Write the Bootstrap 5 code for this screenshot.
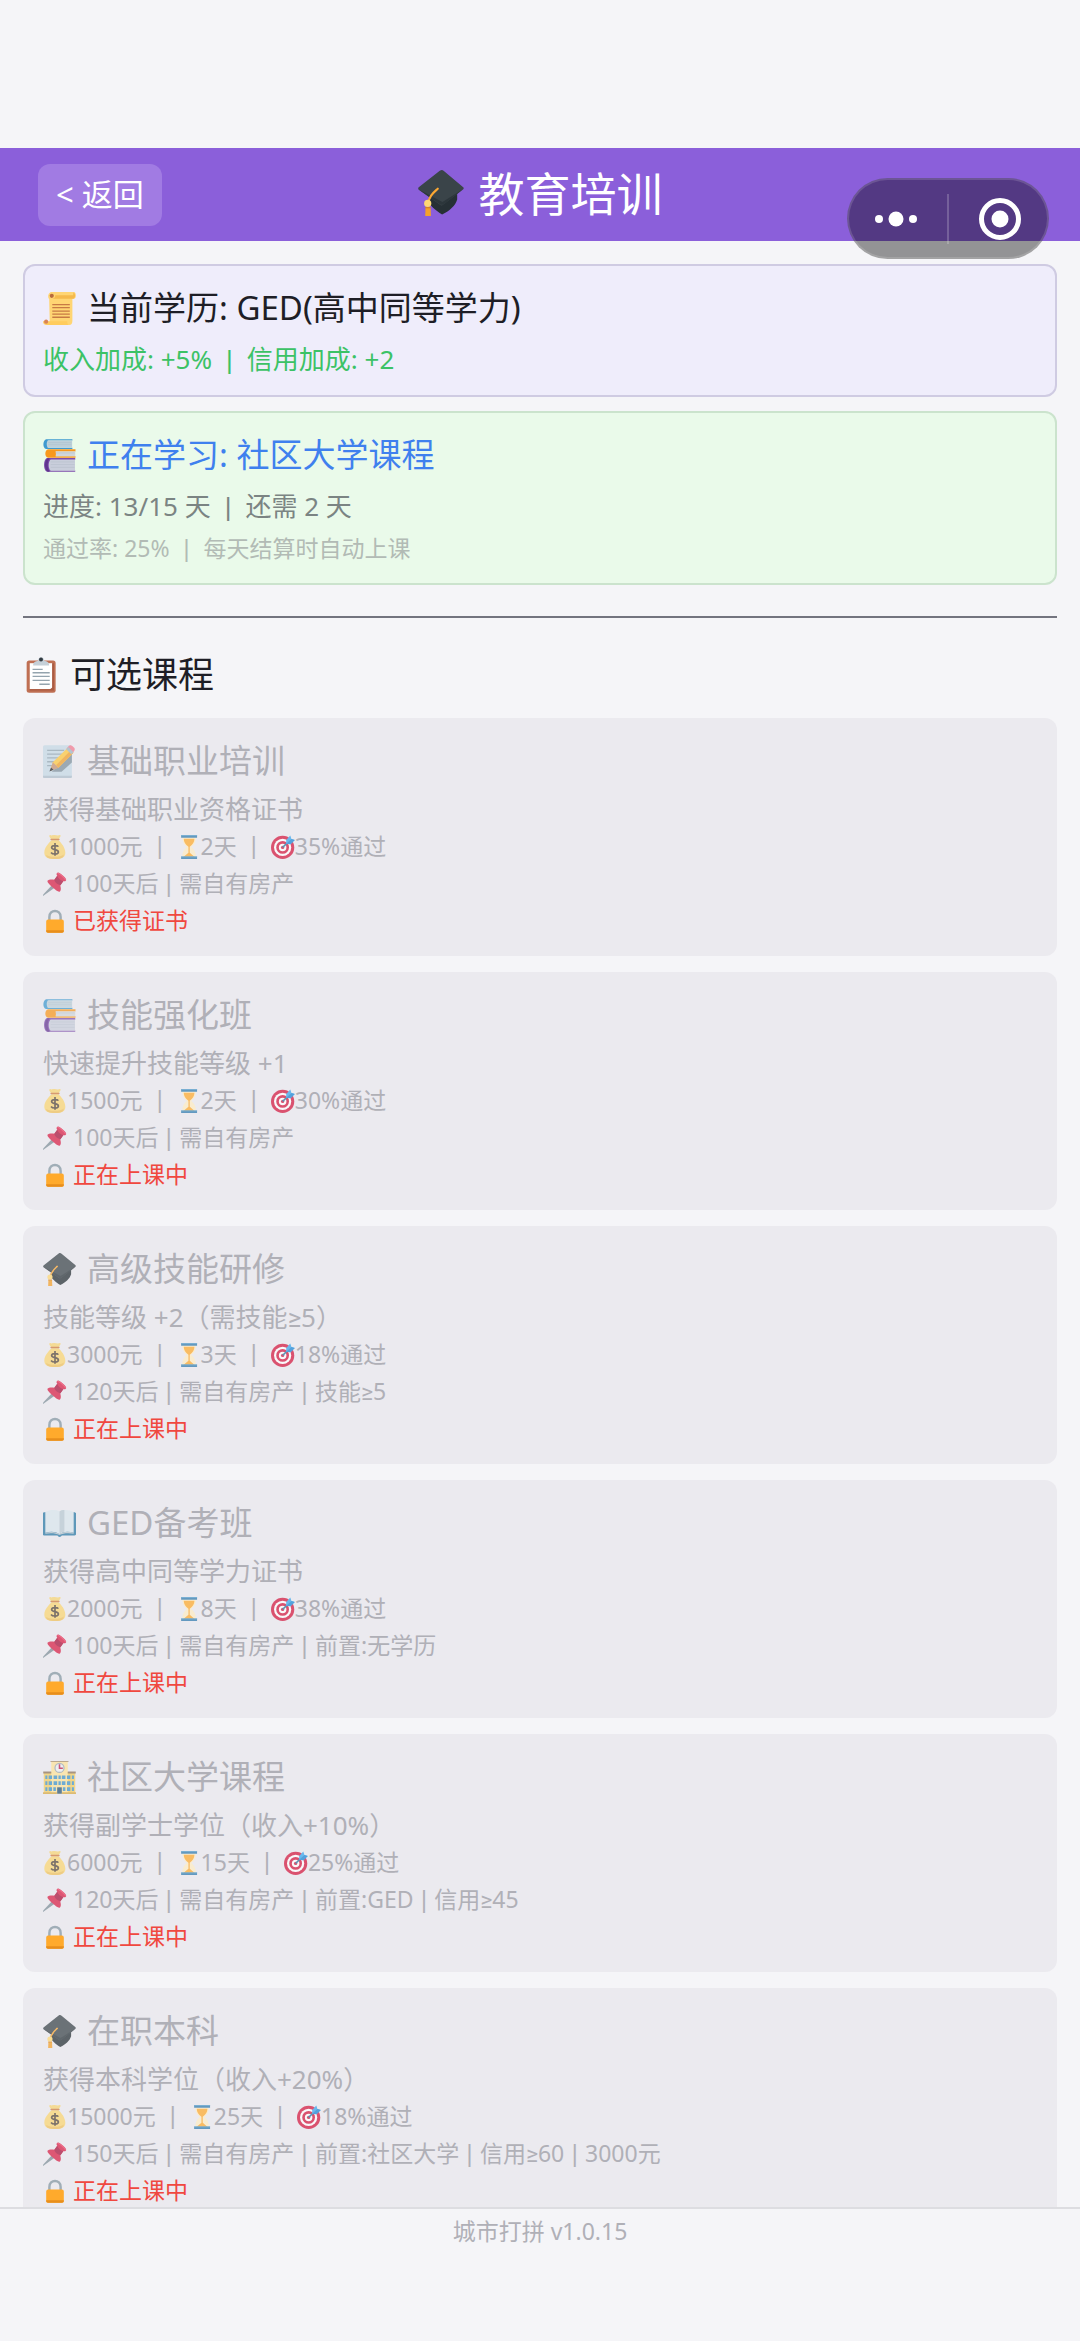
<!DOCTYPE html>
<html lang="zh-CN">
<head>
<meta charset="utf-8">
<meta name="viewport" content="width=device-width, initial-scale=1">
<title>教育培训</title>
<link href="https://cdn.jsdelivr.net/npm/bootstrap@5.3.0/dist/css/bootstrap.min.css" rel="stylesheet">
<style>
  body { background: #f5f5f8; color: #1e1e26; font-family: "Noto Sans", Roboto, "Noto Sans CJK SC", sans-serif; }
  .status-space { height: 148px; }
  .top-bar { height: 93px; background: #8b5fda; z-index: 2; }
  .top-bar h1 { font-size: 46px; line-height: 60px; font-weight: 400; gap: 15px; }
  .back-btn { left: 38px; font-size: 31px; line-height: 40px; padding: 10px 18px 12px; border: 0; border-radius: 12px; background: #a17be3; color: #fff; }
  .back-btn:hover { background: #ad8ae8; color: #fff; }
  .capsule { top: 30px; right: 31px; width: 202px; height: 81px; border-radius: 41px; background: rgba(0,0,0,.4); border: 2px solid rgba(255,255,255,.14); }
  .capsule button { background: none; border: 0; color: #fff; }
  .capsule-rule { width: 2px; height: 50px; background: rgba(255,255,255,.2); }
  main { padding: 23px 23px 0; scrollbar-width: none; }
  main::-webkit-scrollbar { display: none; }
  .ico { width: 1em; height: 1em; flex: none; overflow: visible; }
  .panel { border-radius: 12px; border-width: 2px; padding: 19px 18px 17px; margin-bottom: 14px; color: #1e1e26; }
  .panel-degree { background: #efedfb; border-color: #cfcbe2; }
  .panel-study { background: #eafaea; border-color: #cbe3cd; padding-bottom: 16px; margin-bottom: 31px; }
  .line-title { font-size: 33px; line-height: 46px; font-weight: 400; gap: 11px; }
  .line-text { font-size: 26px; line-height: 38px; }
  .line-note { font-size: 23px; line-height: 37px; }
  .panel .line-title { margin-bottom: 9px; }
  .t-green { color: #3cc266; }
  .t-blue { color: #3f80ee; }
  .t-grey { color: #7b8483; }
  .t-faint { color: #b2bbb5; margin-top: 5px; }
  .bar, .sep { font-family: "Liberation Sans", sans-serif; line-height: 1; }
  .bar { margin: 0 14px; }
  .sep { margin: 0 1px; }
  .divider { height: 2px; background: #73747f; opacity: 1; border: 0; margin: 0 0 32px; }
  .section-title { font-size: 36px; line-height: 50px; font-weight: 400; gap: 11px; margin-bottom: 18px; }
  .course { background: #ebeaef; border: 0; border-radius: 12px; padding: 20px 20px 17px; margin-bottom: 16px; color: #b0b0b7; }
  .course .line-title { margin-bottom: 6px; }
  .faded { opacity: .72; }
  .course .line-note { display: flex; align-items: center; gap: 6px; }
  .course .line-note.facts { gap: 0; }
  .course .line-note .ico { width: 24px; height: 24px; }
  .course .line-note .fact { display: inline-flex; align-items: center; }
  .course .locked { color: #f0483f; }
  .foot { height: 134px; border-top: 2px solid #dddde1; color: #b0b0b7; padding-top: 4px; }
</style>
</head>
<body>
<svg class="d-none" xmlns="http://www.w3.org/2000/svg">
  <symbol id="i-cap" viewBox="0 0 128 128">
    <path d="M40 62 28 84c2 14 22 28 39 40 22-11 37-25 42-42V52z" fill="#263035"/>
    <path d="M66 0c-3 0-5 2-9 5L2 48c-2 2-2 5 0 7l59 42c3 2 6 2 9 0l55-43c3-2 3-5 0-7L72 3c-2-2-4-3-6-3z" fill="#3a4449"/>
    <path d="M2 54l61 43 7 0 56-44-58 36z" fill="#2c363b"/>
    <path d="M55 52C42 64 31 72 28 94" fill="none" stroke="#fca833" stroke-width="6" stroke-linecap="round"/>
    <path d="M21 104h14l1 24c-5 3-12 3-16 0z" fill="#f5a12a"/><circle cx="27" cy="93" r="10" fill="#ffd873"/><path d="M20 105h15" stroke="#d98215" stroke-width="3"/>
  </symbol>
  <symbol id="i-scroll" viewBox="0 0 128 128">
    <path d="M34 0h86c9 0 11 24 0 26h-6v86c0 9-4 16-12 16H14c10-1 12-8 12-17l-2-84c-7-3-5-27 10-27z" fill="#ffd573"/>
    <path d="M36 26h82c8-3 9-20 0-24l-1 11H47c2 6-3 12-11 13z" fill="#f5b94c"/>
    <path d="M0 113h94c0 8 2 14 6 15H14C6 128-1 121 0 113z" fill="#ffcc5e"/>
    <circle cx="34" cy="15" r="8" fill="#b96b3c"/><circle cx="12" cy="115" r="8" fill="#d98356"/>
    <path d="M36 49h68M36 61h68M36 74h68M36 86h68M36 98h68" stroke="#c77a45" stroke-width="5"/>
  </symbol>
  <symbol id="i-books" viewBox="0 0 128 128">
    <path d="M12 1h102v5H20v28h94v5H12C-3 34-1 6 12 1z" fill="#3f9ad0"/><path d="M18 6h95v28H18c-5-7-5-21 0-28z" fill="#bdd0da"/><path d="M20 14h90M20 22h90" stroke="#a9bfcb" stroke-width="2"/>
    <path d="M20 40h106v8H50v19h76v6H20C5 69 6 44 20 40z" fill="#f8981d"/><path d="M48 48h77v19H48c4-6 4-13 0-19z" fill="#d0d6db"/><path d="M50 54h72" stroke="#b5bec4" stroke-width="2"/>
    <path d="M15 74h110v6H30v42h95v5H15C0 121 1 80 15 74z" fill="#7c4bab"/><path d="M28 80h96v42H28c-8-11-8-31 0-42z" fill="#c9cedb"/><path d="M18 75c-14 10-13 42 0 52h8c-10-14-10-38 0-52z" fill="#61358e"/><path d="M30 89h92M30 99h92M30 110h92" stroke="#b4bac9" stroke-width="2"/>
  </symbol>
  <symbol id="i-clipboard" viewBox="0 0 128 128">
    <rect x="13" y="12" width="103" height="115" rx="9" fill="#bf6f53"/><path d="M24 22h80v92H24z" fill="#fff"/><path d="M104 22v86l-8 7H24v4h86V22z" fill="#a95b42"/>
    <path d="M36 30c0-12 10-16 17-16 1-18 22-18 23 0 8 0 17 4 17 16z" fill="#c5d0d8"/><circle cx="64" cy="9" r="7" fill="#333b42"/>
    <path d="M34 44h36M34 56h61M34 69h61M34 83h61M58 97h37" stroke="#94a4ae" stroke-width="5"/>
  </symbol>
  <symbol id="i-memo" viewBox="0 0 128 128">
    <rect x="0" y="1" width="112" height="127" rx="6" fill="#c6dae6"/><path d="M0 119h112v4c0 3-2 5-5 5H5c-3 0-5-2-5-5z" fill="#aebfcc"/>
    <path d="M16 21h66M16 35h58M16 50h46M16 65h37M16 80h22" stroke="#91a5b2" stroke-width="5"/>
    <path d="M112 30v38L72 104H34z" fill="#7f919c"/>
    <path d="M29 96 38 67 97 10l21 20-58 58z" fill="#ffc83f"/><path d="m108 20 10 10-58 58-9-10z" fill="#f2a22a"/>
    <path d="M38 67 29 96l-3 6 34-14z" fill="#c69271"/><path d="m31 87-6 16 16-7z" fill="#24282b"/><path d="m91 15 8-10c6-7 11-4 17 1s10 10 5 17l-9 11z" fill="#f27c91"/><path d="m90 16 8-8 20 20-8 8z" fill="#9fb6c2"/>
  </symbol>
  <symbol id="i-bag" viewBox="0 0 128 128">
    <path d="M38 0c9 5 13 0 23 0s18 5 29 0c6 0 5 7 0 12l-8 16H47L36 12c-4-5-3-12 2-12z" fill="#f8d674"/>
    <path d="M46 28h37c14 15 35 36 36 65 1 25-18 35-55 35S7 119 7 94c1-30 24-51 39-66z" fill="#fbd672"/><path d="M17 105c10 14 82 16 92-3 5 15-8 26-45 26-30 0-49-7-47-23z" fill="#f0c15c"/>
    <path d="M43 24h42" stroke="#cf7b42" stroke-width="7" stroke-linecap="round"/>
    <path d="M82 62c-5-7-36-9-36 5 0 15 36 7 36 23 0 14-31 15-39 3M64 43v67" fill="none" stroke="#544639" stroke-width="9"/>
  </symbol>
  <symbol id="i-hour" viewBox="0 0 128 128">
    <path d="M28 9h73c0 25-8 41-25 54 17 15 25 32 25 56H28c0-24 8-41 25-56C36 50 28 34 28 9z" fill="#ffedc4"/>
    <path d="M36 20h57c-1 19-9 31-25 42v32l26 23H34l27-23V62C45 51 37 39 36 20z" fill="#ffab2e"/>
    <path d="M22 0h85v14H22zM22 114h85v14H22z" fill="#2f7bae"/><path d="M22 0h85v4H22zM22 114h85v4H22z" fill="#5ba4cf"/>
  </symbol>
  <symbol id="i-target" viewBox="0 0 128 128">
    <circle cx="62" cy="66" r="62" fill="#d4183f"/><circle cx="62" cy="66" r="46" fill="#fff"/><circle cx="62" cy="66" r="34" fill="#d4183f"/><circle cx="62" cy="66" r="20" fill="#fff"/><circle cx="62" cy="66" r="9" fill="#d4183f"/>
    <path d="m62 66 34-33" stroke="#24749e" stroke-width="8"/><path d="M81 47V26l22-23 6 18 18 6-23 22z" fill="#39a5ed"/><path d="m81 47 28-26 18 6-23 22z" fill="#1b86d6"/>
  </symbol>
  <symbol id="i-pin" viewBox="0 0 128 128">
    <path d="m46 72 14 13-60 43-3-4z" fill="#7f9099"/>
    <path d="M73 8c6-11 15-4 29 8s26 22 20 30c-5 6-11 3-14 3L92 72c4 12 5 26-2 32-7 5-22-7-38-21S21 55 24 47c6-9 25-8 36-6l16-21c-3-4-5-8-3-12z" fill="#d81f45"/>
    <path d="M76 20c4 13 15 24 32 29L93 71C79 68 65 58 60 43z" fill="#a9133c"/><path d="M75 8c10 3 40 24 44 39 11-7-9-21-17-31C90 6 78-1 75 8z" fill="#ee4163"/>
  </symbol>
  <symbol id="i-lock" viewBox="0 0 128 128">
    <path d="M34 64V42c0-42 60-42 60 0v22" fill="none" stroke="#a0aeb7" stroke-width="13"/>
    <rect x="17" y="56" width="94" height="70" rx="10" fill="#ffaa2c"/><path d="M17 113h94v4c0 6-4 9-9 9H26c-5 0-9-3-9-9z" fill="#e78e1c"/>
  </symbol>
  <symbol id="i-open" viewBox="0 0 128 128">
    <path d="M4 20c-6 2-5 8-5 12v70c0 8 4 9 10 9h47c3 7 14 7 17 0h46c8 0 10-3 10-10V32c0-5 0-10-6-12z" fill="#2979a5"/>
    <path d="M9 20c16-11 42-10 55-3 12-8 40-7 55 3v80c-19-6-42-6-55 6-14-12-36-12-55-6z" fill="#dae7ed"/>
    <path d="M64 17v89c-12-9-31-12-55-6v4c23-4 40-2 55 5 14-7 33-9 55-5v-4c-18-6-42-5-55 6z" fill="#b5c4cc"/><path d="M64 17c5-3 12-5 19-5v84c-9 0-15 4-19 10z" fill="#b9c9d2"/>
  </symbol>
  <symbol id="i-school" viewBox="0 0 128 128">
    <path d="M3 43h122v85H3z" fill="#f5ce61"/><path d="M32 0h64v128H32z" fill="#ffe49a"/><path d="M29-3h70v6H29zM1 41h31v7H1zM96 41h31v7H96z" fill="#8d7458"/>
    <circle cx="64" cy="27" r="20" fill="#9da9b0"/><circle cx="64" cy="27" r="15" fill="#eef1f2"/><path d="M64 13v15h13" fill="none" stroke="#bf1e4b" stroke-width="6"/>
    <path d="M9 56h8v14H9zM22 56h13v14H22zM41 56h14v14H41zM73 56h14v14H73zM93 56h13v14H93zM112 56h8v14h-8zM9 79h8v14H9zM22 79h13v14H22zM41 79h14v14H41zM73 79h14v14H73zM93 79h13v14H93zM112 79h8v14h-8zM9 102h8v14H9zM22 102h13v14H22zM93 102h13v14H93zM112 102h8v14h-8zM60 56h9v14h-9zM60 79h9v14h-9zM40 102h10v14H40zM77 102h10v14H77z" fill="#3f94c9"/>
    <path d="M55 102h18v25H55z" fill="#2a5576"/><path d="M0 121h54v7H0zM74 121h54v7H74z" fill="#d7a944"/>
  </symbol>
</svg>

<div class="d-flex flex-column vh-100">
  <div class="status-space flex-shrink-0"></div>
  <header class="top-bar position-relative flex-shrink-0 d-flex align-items-center justify-content-center text-white">
    <button type="button" class="btn back-btn position-absolute">&lt; 返回</button>
    <h1 class="d-flex align-items-center mb-0 pb-1"><svg class="ico" aria-hidden="true"><use href="#i-cap"/></svg>教育培训</h1>
    <div class="capsule position-absolute d-flex align-items-center">
      <button type="button" class="flex-fill p-0 pe-1 d-flex justify-content-center" aria-label="更多"><svg width="44" height="44" viewBox="0 0 44 44" fill="#fff"><circle cx="5" cy="22" r="4"/><circle cx="22" cy="22" r="7.5"/><circle cx="39" cy="22" r="4"/></svg></button>
      <div class="capsule-rule"></div>
      <button type="button" class="flex-fill p-0 ps-1 d-flex justify-content-center" aria-label="关闭"><svg width="44" height="44" viewBox="0 0 44 44"><circle cx="22" cy="22" r="18.5" fill="none" stroke="#fff" stroke-width="5"/><circle cx="22" cy="22" r="8.5" fill="#fff"/></svg></button>
    </div>
  </header>

  <main class="flex-grow-1 overflow-auto">
    <section class="card panel panel-degree">
      <h2 class="line-title d-flex align-items-center"><svg class="ico" aria-hidden="true"><use href="#i-scroll"/></svg>当前学历: GED(高中同等学力)</h2>
      <div class="line-text t-green">收入加成: +5%<span class="bar">|</span>信用加成: +2</div>
    </section>
    <section class="card panel panel-study">
      <h2 class="line-title t-blue d-flex align-items-center"><svg class="ico" aria-hidden="true"><use href="#i-books"/></svg>正在学习: 社区大学课程</h2>
      <div class="line-text t-grey">进度: 13/15 天<span class="bar">|</span>还需 2 天</div>
      <div class="line-note t-faint">通过率: 25%<span class="bar">|</span>每天结算时自动上课</div>
    </section>

    <hr class="divider">
    <h2 class="section-title d-flex align-items-center"><svg class="ico" aria-hidden="true"><use href="#i-clipboard"/></svg>可选课程</h2>

    <article class="card course">
      <h3 class="line-title d-flex align-items-center"><svg class="ico faded" aria-hidden="true"><use href="#i-memo"/></svg>基础职业培训</h3>
      <div class="line-text">获得基础职业资格证书</div>
      <div class="line-note facts"><span class="fact"><svg class="ico faded" aria-hidden="true"><use href="#i-bag"/></svg>1000元</span><span class="bar">|</span><span class="fact"><svg class="ico faded" aria-hidden="true"><use href="#i-hour"/></svg>2天</span><span class="bar">|</span><span class="fact"><svg class="ico faded" aria-hidden="true"><use href="#i-target"/></svg>35%通过</span></div>
      <div class="line-note"><svg class="ico faded" aria-hidden="true"><use href="#i-pin"/></svg><span>100天后<span class="sep"> | </span>需自有房产</span></div>
      <div class="line-note locked"><svg class="ico" aria-hidden="true"><use href="#i-lock"/></svg>已获得证书</div>
    </article>

    <article class="card course">
      <h3 class="line-title d-flex align-items-center"><svg class="ico faded" aria-hidden="true"><use href="#i-books"/></svg>技能强化班</h3>
      <div class="line-text">快速提升技能等级 +1</div>
      <div class="line-note facts"><span class="fact"><svg class="ico faded" aria-hidden="true"><use href="#i-bag"/></svg>1500元</span><span class="bar">|</span><span class="fact"><svg class="ico faded" aria-hidden="true"><use href="#i-hour"/></svg>2天</span><span class="bar">|</span><span class="fact"><svg class="ico faded" aria-hidden="true"><use href="#i-target"/></svg>30%通过</span></div>
      <div class="line-note"><svg class="ico faded" aria-hidden="true"><use href="#i-pin"/></svg><span>100天后<span class="sep"> | </span>需自有房产</span></div>
      <div class="line-note locked"><svg class="ico" aria-hidden="true"><use href="#i-lock"/></svg>正在上课中</div>
    </article>

    <article class="card course">
      <h3 class="line-title d-flex align-items-center"><svg class="ico faded" aria-hidden="true"><use href="#i-cap"/></svg>高级技能研修</h3>
      <div class="line-text">技能等级 +2（需技能≥5）</div>
      <div class="line-note facts"><span class="fact"><svg class="ico faded" aria-hidden="true"><use href="#i-bag"/></svg>3000元</span><span class="bar">|</span><span class="fact"><svg class="ico faded" aria-hidden="true"><use href="#i-hour"/></svg>3天</span><span class="bar">|</span><span class="fact"><svg class="ico faded" aria-hidden="true"><use href="#i-target"/></svg>18%通过</span></div>
      <div class="line-note"><svg class="ico faded" aria-hidden="true"><use href="#i-pin"/></svg><span>120天后<span class="sep"> | </span>需自有房产<span class="sep"> | </span>技能≥5</span></div>
      <div class="line-note locked"><svg class="ico" aria-hidden="true"><use href="#i-lock"/></svg>正在上课中</div>
    </article>

    <article class="card course">
      <h3 class="line-title d-flex align-items-center"><svg class="ico faded" aria-hidden="true"><use href="#i-open"/></svg>GED备考班</h3>
      <div class="line-text">获得高中同等学力证书</div>
      <div class="line-note facts"><span class="fact"><svg class="ico faded" aria-hidden="true"><use href="#i-bag"/></svg>2000元</span><span class="bar">|</span><span class="fact"><svg class="ico faded" aria-hidden="true"><use href="#i-hour"/></svg>8天</span><span class="bar">|</span><span class="fact"><svg class="ico faded" aria-hidden="true"><use href="#i-target"/></svg>38%通过</span></div>
      <div class="line-note"><svg class="ico faded" aria-hidden="true"><use href="#i-pin"/></svg><span>100天后<span class="sep"> | </span>需自有房产<span class="sep"> | </span>前置:无学历</span></div>
      <div class="line-note locked"><svg class="ico" aria-hidden="true"><use href="#i-lock"/></svg>正在上课中</div>
    </article>

    <article class="card course">
      <h3 class="line-title d-flex align-items-center"><svg class="ico faded" aria-hidden="true"><use href="#i-school"/></svg>社区大学课程</h3>
      <div class="line-text">获得副学士学位（收入+10%）</div>
      <div class="line-note facts"><span class="fact"><svg class="ico faded" aria-hidden="true"><use href="#i-bag"/></svg>6000元</span><span class="bar">|</span><span class="fact"><svg class="ico faded" aria-hidden="true"><use href="#i-hour"/></svg>15天</span><span class="bar">|</span><span class="fact"><svg class="ico faded" aria-hidden="true"><use href="#i-target"/></svg>25%通过</span></div>
      <div class="line-note"><svg class="ico faded" aria-hidden="true"><use href="#i-pin"/></svg><span>120天后<span class="sep"> | </span>需自有房产<span class="sep"> | </span>前置:GED<span class="sep"> | </span>信用≥45</span></div>
      <div class="line-note locked"><svg class="ico" aria-hidden="true"><use href="#i-lock"/></svg>正在上课中</div>
    </article>

    <article class="card course">
      <h3 class="line-title d-flex align-items-center"><svg class="ico faded" aria-hidden="true"><use href="#i-cap"/></svg>在职本科</h3>
      <div class="line-text">获得本科学位（收入+20%）</div>
      <div class="line-note facts"><span class="fact"><svg class="ico faded" aria-hidden="true"><use href="#i-bag"/></svg>15000元</span><span class="bar">|</span><span class="fact"><svg class="ico faded" aria-hidden="true"><use href="#i-hour"/></svg>25天</span><span class="bar">|</span><span class="fact"><svg class="ico faded" aria-hidden="true"><use href="#i-target"/></svg>18%通过</span></div>
      <div class="line-note"><svg class="ico faded" aria-hidden="true"><use href="#i-pin"/></svg><span>150天后<span class="sep"> | </span>需自有房产<span class="sep"> | </span>前置:社区大学<span class="sep"> | </span>信用≥60<span class="sep"> | </span>3000元</span></div>
      <div class="line-note locked"><svg class="ico" aria-hidden="true"><use href="#i-lock"/></svg>正在上课中</div>
    </article>
  </main>

  <footer class="foot flex-shrink-0 text-center line-note">城市打拼 v1.0.15</footer>
</div>
<script src="https://cdn.jsdelivr.net/npm/bootstrap@5.3.0/dist/js/bootstrap.bundle.min.js"></script>
</body>
</html>
